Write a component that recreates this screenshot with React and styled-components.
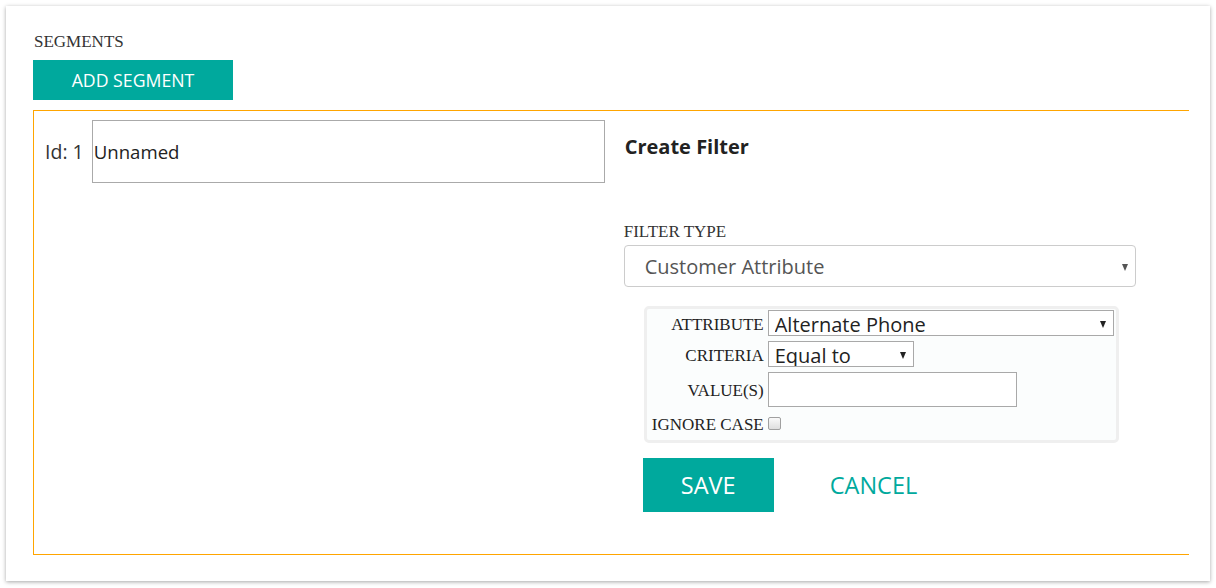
import React from "react";
import styled, { createGlobalStyle } from "styled-components";

const SANS = `"Open Sans", "Noto Sans", sans-serif`;
const SERIF = `"Liberation Serif", "Times New Roman", serif`;
const TEAL = "#00a99d";
const ORANGE = "#ffa500";

const GlobalStyle = createGlobalStyle`
  html, body {
    margin: 0;
    padding: 0;
    background: #fff;
  }
  body {
    font-family: ${SANS};
    color: #333;
  }
`;

// outer white card with a soft shadow
const Card = styled.div`
  box-sizing: border-box;
  margin: 6px;
  width: 1204px;
  height: 575px;
  padding: 26px 21px 0 27px;
  background: #fff;
  box-shadow: 0 1px 4px rgba(0, 0, 0, 0.35);
`;

const SectionTitle = styled.div`
  font-family: ${SERIF};
  font-size: 17px;
  line-height: 20px;
  color: #333;
  padding-left: 1px;
`;

const TealButton = styled.button`
  display: block;
  box-sizing: border-box;
  width: ${({ w }) => w}px;
  height: ${({ h }) => h}px;
  margin: ${({ m }) => m || 0};
  border: none;
  border-radius: 0;
  background: ${TEAL};
  color: #fff;
  font-family: ${SANS};
  font-size: ${({ size }) => size}px;
  cursor: pointer;
  padding: 0;
`;

const SegmentBox = styled.div`
  box-sizing: border-box;
  display: flex;
  height: 445px;
  margin-top: 10px;
  border-top: 1px solid ${ORANGE};
  border-left: 1px solid ${ORANGE};
  border-bottom: 1px solid ${ORANGE};
`;

const SegmentCol = styled.div`
  display: flex;
  align-items: center;
  align-self: flex-start;
  gap: 8px;
  padding: 9px 0 0 11px;
`;

const IdLabel = styled.span`
  font-size: 19.5px;
  color: #333;
`;

const NameInput = styled.input`
  box-sizing: border-box;
  width: 513px;
  height: 63px;
  border: 1px solid #aaa;
  padding: 0 1px;
  font-family: ${SANS};
  font-size: 18.6px;
  color: #222;
  outline: none;
`;

const FilterCol = styled.div`
  display: flex;
  flex-direction: column;
  margin-left: 19px;
  padding-top: 23px;
  width: 512px;
`;

const FilterTitle = styled.div`
  font-size: 20px;
  font-weight: 700;
  line-height: 26px;
  color: #222;
  padding-left: 1px;
`;

const FieldLabel = styled.div`
  font-family: ${SERIF};
  font-size: 17px;
  line-height: 18px;
  color: #333;
  margin-top: 63px;
`;

const SelectWrap = styled.div`
  position: relative;
  width: ${({ w }) => w}px;
  margin-top: ${({ mt }) => mt || 0}px;
`;

const Select = styled.select`
  appearance: none;
  -webkit-appearance: none;
  display: block;
  box-sizing: border-box;
  width: 100%;
  height: ${({ h }) => h}px;
  margin: 0;
  padding: ${({ pad }) => pad};
  border: 1px solid ${({ light }) => (light ? "#ccc" : "#a9a9a9")};
  border-radius: ${({ light }) => (light ? "4px" : "0")};
  background: #fff;
  font-family: ${SANS};
  font-size: 20px;
  color: ${({ light }) => (light ? "#555" : "#222")};
  outline: none;
`;

const Caret = styled.span`
  position: absolute;
  right: ${({ r }) => r}px;
  top: 50%;
  margin-top: -2px;
  width: 0;
  height: 0;
  border-left: 3.5px solid transparent;
  border-right: 3.5px solid transparent;
  border-top: 7px solid ${({ c }) => c};
  pointer-events: none;
`;

const Panel = styled.div`
  box-sizing: border-box;
  width: 475px;
  height: 137px;
  margin: 19px 0 0 20px;
  border: 3px solid #efefef;
  border-radius: 5px;
  background: #fbfdfd;
  padding: 1px 2px 0 1px;
  display: grid;
  grid-template-columns: 116px 1fr;
  grid-auto-rows: min-content;
  column-gap: 4px;
  row-gap: 5px;
  align-items: center;
`;

const RowLabel = styled.label`
  font-family: ${SERIF};
  font-size: 17px;
  line-height: 20px;
  padding-top: 3px;
  color: #222;
  text-align: right;
  white-space: nowrap;
`;

const ValueInput = styled.input`
  box-sizing: border-box;
  width: 249px;
  height: 35px;
  border: 1px solid #a9a9a9;
  outline: none;
`;

const Check = styled.input`
  appearance: none;
  -webkit-appearance: none;
  box-sizing: border-box;
  width: 13px;
  height: 13px;
  margin: 0;
  border: 1px solid #a0a0a0;
  border-radius: 2px;
  background: linear-gradient(#fafafa, #dedede);
`;

const CheckCell = styled.div`
  display: flex;
  align-items: center;
  height: 22px;
`;

const Actions = styled.div`
  display: flex;
  align-items: center;
  margin: 15px 0 0 19px;
`;

const LinkButton = styled.button`
  border: none;
  background: none;
  color: ${TEAL};
  font-family: ${SANS};
  font-size: 23.5px;
  margin-left: 56px;
  padding: 0;
  cursor: pointer;
`;

export default function App() {
  return (
    <>
      <GlobalStyle />
      <Card>
        <SectionTitle>SEGMENTS</SectionTitle>
        <TealButton w={200} h={40} m="8px 0 0 0" size={17.7}>ADD SEGMENT</TealButton>
        <SegmentBox>
          <SegmentCol>
            <IdLabel>Id: 1</IdLabel>
            <NameInput defaultValue="Unnamed" />
          </SegmentCol>
          <FilterCol>
            <FilterTitle>Create Filter</FilterTitle>
            <FieldLabel>FILTER TYPE</FieldLabel>
            <SelectWrap w={512} mt={4}>
              <Select h={42} light pad="0 20px">
                <option>Customer Attribute</option>
              </Select>
              <Caret r={8} c="#555" />
            </SelectWrap>
            <Panel>
              <RowLabel>ATTRIBUTE</RowLabel>
              <SelectWrap w={346}>
                <Select h={26} pad="0 6px">
                  <option>Alternate Phone</option>
                </Select>
                <Caret r={8} c="#222" />
              </SelectWrap>
              <RowLabel>CRITERIA</RowLabel>
              <SelectWrap w={146}>
                <Select h={26} pad="0 6px">
                  <option>Equal to</option>
                </Select>
                <Caret r={8} c="#222" />
              </SelectWrap>
              <RowLabel>VALUE(S)</RowLabel>
              <ValueInput />
              <RowLabel>IGNORE CASE</RowLabel>
              <CheckCell>
                <Check type="checkbox" />
              </CheckCell>
            </Panel>
            <Actions>
              <TealButton w={131} h={54} size={23.5}>SAVE</TealButton>
              <LinkButton>CANCEL</LinkButton>
            </Actions>
          </FilterCol>
        </SegmentBox>
      </Card>
    </>
  );
}
